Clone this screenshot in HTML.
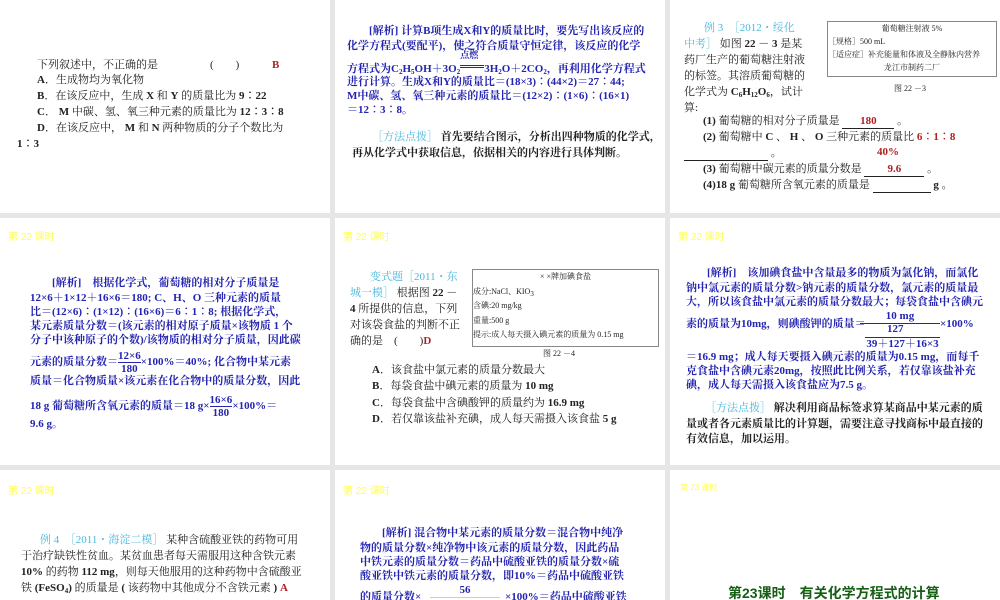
<!DOCTYPE html>
<html><head><meta charset="utf-8"><style>
*{margin:0;padding:0}
body{width:1000px;height:600px;background:#e6e6e6;position:relative;overflow:hidden;font-family:"Liberation Serif","Noto Serif CJK SC",serif;font-size:11px;color:#222}
sub{font-size:7px;line-height:0;vertical-align:-2px}
.s{position:absolute;background:#fff;overflow:hidden}
.l{position:absolute;white-space:nowrap;line-height:13px}
.b{color:#2424b0;font-weight:bold}
.c{color:#4db8dc}
.r{color:#b02020;font-weight:bold}
.h{position:absolute;color:#ffff50;font-family:"Liberation Sans","Noto Sans CJK SC",sans-serif;font-size:10px}
.fr{display:inline-block;vertical-align:middle;text-align:center;line-height:12px}
.fr span{display:block}
.fr .n{border-bottom:1px solid #2424b0}
.box{position:absolute;border:1px solid #888;font-size:8px}
</style></head><body>
<div class="s" style="left:0;top:0;width:330px;height:213px">
<div class="l" style="left:37px;top:59px">下列叙述中，不正确的是</div>
<div class="l" style="left:210px;top:59px">(　　)</div>
<div class="l r" style="left:272px;top:59px">B</div>
<div class="l" style="left:37px;top:74px"><b>A</b>．生成物均为氧化物</div>
<div class="l" style="left:37px;top:90px"><b>B</b>．在该反应中，生成 <b>X</b> 和 <b>Y</b> 的质量比为 <b>9∶22</b></div>
<div class="l" style="left:37px;top:106px"><b>C</b>． <b>M</b> 中碳、氢、氧三种元素的质量比为 <b>12∶3∶8</b></div>
<div class="l" style="left:37px;top:122px"><b>D</b>．在该反应中， <b>M</b> 和 <b>N</b> 两种物质的分子个数比为</div>
<div class="l" style="left:17px;top:138px"><b>1∶3</b></div>
</div>
<div class="s" style="left:335px;top:0;width:330px;height:213px">
<div class="l b" style="left:34px;top:25px">[解析]  计算B项生成X和Y的质量比时，要先写出该反应的</div>
<div class="l b" style="left:12px;top:40px">化学方程式(要配平)，使之符合质量守恒定律，该反应的化学</div>
<div class="l b" style="left:12px;top:61px">方程式为C<sub>2</sub>H<sub>5</sub>OH＋3O<sub>2</sub><span style="position:relative;display:inline-block;border-bottom:3px double #2424b0;width:24px;height:4px;vertical-align:4px"><span style="position:absolute;top:-12px;left:0;font-size:9px">点燃</span></span>3H<sub>2</sub>O＋2CO<sub>2</sub>，再利用化学方程式</div>
<div class="l b" style="left:12px;top:76px">进行计算。生成X和Y的质量比＝(18×3)∶(44×2)＝27∶44;</div>
<div class="l b" style="left:12px;top:90px">M中碳、氢、氧三种元素的质量比＝(12×2)∶(1×6)∶(16×1)</div>
<div class="l b" style="left:12px;top:104px">＝12∶3∶8。</div>
<div class="l" style="left:37px;top:131px"><span class="c">［方法点拨］</span> <b>首先要结合图示，分析出四种物质的化学式，</b></div>
<div class="l" style="left:17px;top:147px"><b>再从化学式中获取信息，依据相关的内容进行具体判断。</b></div>
</div>
<div class="s" style="left:670px;top:0;width:330px;height:213px">
<div class="l" style="left:34px;top:22px"><span class="c">例 3　［2012・绥化</span></div>
<div class="l" style="left:14px;top:38px"><span class="c">中考］</span> 如图 <b>22 － 3</b> 是某</div>
<div class="l" style="left:14px;top:54px">药厂生产的葡萄糖注射液</div>
<div class="l" style="left:14px;top:70px">的标签。其溶质葡萄糖的</div>
<div class="l" style="left:14px;top:86px">化学式为 <b>C<sub>6</sub>H<sub>12</sub>O<sub>6</sub></b>，试计</div>
<div class="l" style="left:14px;top:102px">算:</div>
<div class="box" style="left:157px;top:21px;width:168px;height:54px;line-height:13px">
<div style="text-align:center">葡萄糖注射液 5%</div><div>［规格］500 mL</div><div>［适应症］补充能量和体液及全静脉内营养</div><div style="text-align:center">龙江市制药二厂</div></div>
<div class="l" style="left:224px;top:82px;font-size:8px">图 22 －3</div>
<div class="l" style="left:33px;top:115px"><b>(1)</b> 葡萄糖的相对分子质量是 <span style="display:inline-block;width:52px;border-bottom:1px solid #222;text-align:center" class="r">180</span> 。</div>
<div class="l" style="left:33px;top:131px"><b>(2)</b> 葡萄糖中 <b>C</b> 、 <b>H</b> 、 <b>O</b> 三种元素的质量比 <span class="r">6∶1∶8</span></div>
<div class="l" style="left:14px;top:147px"><span style="display:inline-block;width:84px;border-bottom:1px solid #222">&nbsp;</span> 。</div>
<div class="l r" style="left:207px;top:146px">40%</div>
<div class="l" style="left:33px;top:163px"><b>(3)</b> 葡萄糖中碳元素的质量分数是 <span style="display:inline-block;width:60px;border-bottom:1px solid #222;text-align:center" class="r">9.6</span> 。</div>
<div class="l" style="left:33px;top:179px"><b>(4)18 g</b> 葡萄糖所含氧元素的质量是 <span style="display:inline-block;width:58px;border-bottom:1px solid #222">&nbsp;</span> <b>g</b> 。</div>
</div>

<div class="s" style="left:0;top:218px;width:330px;height:247px">
<div class="h" style="left:8px;top:10px">第 22 课时</div>
<div class="l b" style="left:52px;top:59px">[解析]　根据化学式，葡萄糖的相对分子质量是</div>
<div class="l b" style="left:30px;top:74px">12×6＋1×12＋16×6＝180;  C、H、O 三种元素的质量</div>
<div class="l b" style="left:30px;top:88px">比＝(12×6)∶(1×12)∶(16×6)＝6∶1∶8;  根据化学式，</div>
<div class="l b" style="left:30px;top:102px">某元素质量分数＝(该元素的相对原子质量×该物质 1 个</div>
<div class="l b" style="left:30px;top:116px">分子中该种原子的个数)/该物质的相对分子质量，因此碳</div>
<div class="l b" style="left:30px;top:132px">元素的质量分数＝<span class="fr"><span class="n">12×6</span><span>180</span></span>×100%＝40%; 化合物中某元素</div>
<div class="l b" style="left:30px;top:157px">质量＝化合物质量×该元素在化合物中的质量分数，因此</div>
<div class="l b" style="left:30px;top:176px">18  g  葡萄糖所含氧元素的质量＝18  g×<span class="fr"><span class="n">16×6</span><span>180</span></span>×100%＝</div>
<div class="l b" style="left:30px;top:200px">9.6 g。</div>
</div>
<div class="s" style="left:335px;top:218px;width:330px;height:247px">
<div class="h" style="left:8px;top:10px">第 22 课时</div>
<div class="l" style="left:35px;top:53px"><span class="c">变式题［2011・东</span></div>
<div class="l" style="left:15px;top:69px"><span class="c">城一模］</span> 根据图 <b>22 －</b></div>
<div class="l" style="left:15px;top:85px"><b>4</b> 所提供的信息，下列</div>
<div class="l" style="left:15px;top:101px">对该袋食盐的判断不正</div>
<div class="l" style="left:15px;top:117px">确的是　(　　)<span class="r">D</span></div>
<div class="box" style="left:137px;top:51px;width:185px;height:76px;line-height:14.5px">
<div style="text-align:center">× ×牌加碘食盐</div><div>成分:NaCl、KIO<sub>3</sub></div><div>含碘:20 mg/kg</div><div>重量:500 g</div><div>提示:成人每天摄入碘元素的质量为 0.15 mg</div></div>
<div class="l" style="left:208px;top:129px;font-size:8px">图 22 －4</div>
<div class="l" style="left:37px;top:146px"><b>A</b>．该食盐中氯元素的质量分数最大</div>
<div class="l" style="left:37px;top:162px"><b>B</b>．每袋食盐中碘元素的质量为 <b>10 mg</b></div>
<div class="l" style="left:37px;top:179px"><b>C</b>．每袋食盐中含碘酸钾的质量约为 <b>16.9 mg</b></div>
<div class="l" style="left:37px;top:195px"><b>D</b>．若仅靠该盐补充碘，成人每天需摄入该食盐 <b>5 g</b></div>
</div>
<div class="s" style="left:670px;top:218px;width:330px;height:247px">
<div class="h" style="left:8px;top:10px">第 22 课时</div>
<div class="l b" style="left:37px;top:49px">[解析]　该加碘食盐中含量最多的物质为氯化钠，而氯化</div>
<div class="l b" style="left:16px;top:64px">钠中氯元素的质量分数&gt;钠元素的质量分数，氯元素的质量最</div>
<div class="l b" style="left:16px;top:78px">大，所以该食盐中氯元素的质量分数最大；每袋食盐中含碘元</div>
<div class="l b" style="left:16px;top:100px">素的质量为10mg，则碘酸钾的质量＝</div>
<div class="l b" style="left:190px;top:92px;width:80px;text-align:center;border-bottom:1px solid #2424b0">10 mg</div>
<div class="l b" style="left:217px;top:105px">127</div>
<div class="l b" style="left:195px;top:119px;width:75px;border-top:1px solid #2424b0;text-align:center">39＋127＋16×3</div>
<div class="l b" style="left:270px;top:100px">×100%</div>
<div class="l b" style="left:16px;top:133px">＝16.9  mg；成人每天要摄入碘元素的质量为0.15  mg，而每千</div>
<div class="l b" style="left:16px;top:147px">克食盐中含碘元素20mg，按照此比例关系，若仅靠该盐补充</div>
<div class="l b" style="left:16px;top:161px">碘，成人每天需摄入该食盐应为7.5 g。</div>
<div class="l" style="left:35px;top:184px"><span class="c">［方法点拨］</span> <b>解决利用商品标签求算某商品中某元素的质</b></div>
<div class="l" style="left:16px;top:200px"><b>量或者各元素质量比的计算题，需要注意寻找商标中最直接的</b></div>
<div class="l" style="left:16px;top:215px"><b>有效信息，加以运用。</b></div>
</div>

<div class="s" style="left:0;top:470px;width:330px;height:130px">
<div class="h" style="left:8px;top:12px">第 22 课时</div>
<div class="l" style="left:40px;top:64px"><span class="c">例 4　［2011・海淀二模］</span> 某种含硫酸亚铁的药物可用</div>
<div class="l" style="left:21px;top:80px">于治疗缺铁性贫血。某贫血患者每天需服用这种含铁元素</div>
<div class="l" style="left:21px;top:96px"><b>10%</b> 的药物 <b>112 mg</b>，则每天他服用的这种药物中含硫酸亚</div>
<div class="l" style="left:21px;top:112px">铁 <b>(FeSO<sub>4</sub>)</b> 的质量是 <b>(</b> 该药物中其他成分不含铁元素 <b>)</b> <span class="r">A</span></div>
</div>
<div class="s" style="left:335px;top:470px;width:330px;height:130px">
<div class="h" style="left:8px;top:12px">第 22 课时</div>
<div class="l b" style="left:47px;top:57px">[解析]  混合物中某元素的质量分数＝混合物中纯净</div>
<div class="l b" style="left:25px;top:72px">物的质量分数×纯净物中该元素的质量分数，因此药品</div>
<div class="l b" style="left:25px;top:86px">中铁元素的质量分数＝药品中硫酸亚铁的质量分数×硫</div>
<div class="l b" style="left:25px;top:100px">酸亚铁中铁元素的质量分数，即10%＝药品中硫酸亚铁</div>
<div class="l b" style="left:25px;top:121px">的质量分数×</div>
<div class="l b" style="left:95px;top:114px;width:70px;text-align:center;border-bottom:1px solid #ccc">56</div>
<div class="l b" style="left:170px;top:121px">×100%＝药品中硫酸亚铁</div>
</div>
<div class="s" style="left:670px;top:470px;width:330px;height:130px">
<div class="h" style="left:10px;top:12px;font-size:8px">第 23 课时</div>
<div class="l" style="left:58px;top:114px;font-size:14px;line-height:18px;color:#155f15;font-family:'Liberation Sans','Noto Sans CJK SC',sans-serif;font-weight:bold">第23课时　有关化学方程式的计算</div>
</div>
</body></html>
